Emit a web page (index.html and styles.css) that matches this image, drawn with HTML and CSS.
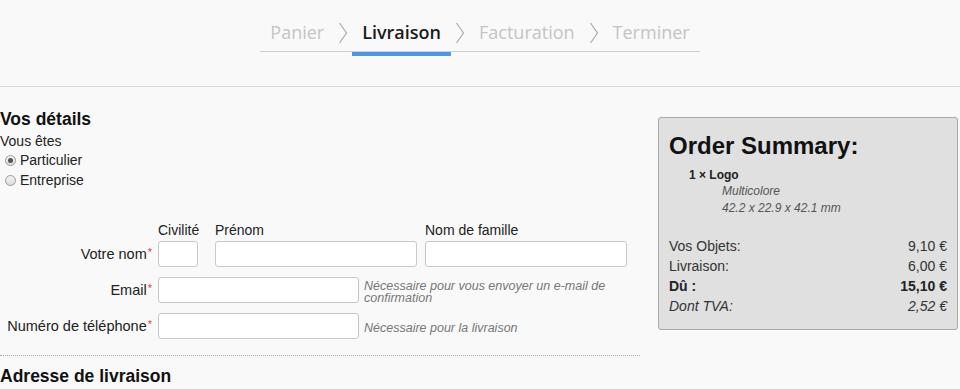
FILE: index.html
```html
<!DOCTYPE html>
<html lang="fr">
<head>
<meta charset="utf-8">
<title>Livraison</title>
<link rel="stylesheet" href="styles.css">
</head>
<body>
<header class="steps-bar">
  <nav class="steps">
    <span class="step">Panier</span>
    <span class="chev"><svg width="10" height="22" viewBox="0 0 10 22"><path d="M1.5 1 L8.5 11 L1.5 21" fill="none" stroke="#aaa" stroke-width="1.2"/></svg></span>
    <span class="step active">Livraison</span>
    <span class="chev"><svg width="10" height="22" viewBox="0 0 10 22"><path d="M1.5 1 L8.5 11 L1.5 21" fill="none" stroke="#aaa" stroke-width="1.2"/></svg></span>
    <span class="step">Facturation</span>
    <span class="chev"><svg width="10" height="22" viewBox="0 0 10 22"><path d="M1.5 1 L8.5 11 L1.5 21" fill="none" stroke="#aaa" stroke-width="1.2"/></svg></span>
    <span class="step">Terminer</span>
  </nav>
</header>
<main class="page">
  <section class="form-col">
    <h2 class="title">Vos détails</h2>
    <div class="who">Vous êtes</div>
    <label class="radio"><span class="rb checked"></span>Particulier</label>
    <label class="radio"><span class="rb"></span>Entreprise</label>

    <div class="grid">
      <div></div>
      <div class="col-heads">
        <span class="h-civ">Civilité</span>
        <span class="h-pre">Prénom</span>
        <span class="h-nom">Nom de famille</span>
      </div>

      <div class="lbl">Votre nom<span class="req">*</span></div>
      <div class="row">
        <span class="in in-civ"></span>
        <span class="in in-pre"></span>
        <span class="in in-nom"></span>
      </div>

      <div class="lbl">Email<span class="req">*</span></div>
      <div class="row">
        <span class="in in-wide"></span>
        <span class="hint">Nécessaire pour vous envoyer un e-mail de confirmation</span>
      </div>

      <div class="lbl">Numéro de téléphone<span class="req">*</span></div>
      <div class="row">
        <span class="in in-wide"></span>
        <span class="hint hint-low">Nécessaire pour la livraison</span>
      </div>
    </div>

    <hr class="dots">
    <h2 class="title">Adresse de livraison</h2>
  </section>

  <aside class="summary">
    <h1 class="sum-title">Order Summary:</h1>
    <div class="item">1 × Logo</div>
    <div class="detail">Multicolore</div>
    <div class="detail">42.2 x 22.9 x 42.1 mm</div>
    <div class="totals">
      <div class="tr"><span>Vos Objets:</span><span>9,10 €</span></div>
      <div class="tr"><span>Livraison:</span><span>6,00 €</span></div>
      <div class="tr bold"><span>Dû :</span><span>15,10 €</span></div>
      <div class="tr ital"><span>Dont TVA:</span><span>2,52 €</span></div>
    </div>
  </aside>
</main>
</body>
</html>
```
FILE: styles.css
```css
* { box-sizing: border-box; }
html, body { margin: 0; padding: 0; }
body {
  background: #f9f9f9;
  font-family: "Liberation Sans", Arial, sans-serif;
  font-size: 14px;
  color: #222;
  width: 960px;
  height: 389px;
  overflow: hidden;
}
.steps-bar {
  height: 87px;
  border-bottom: 1px solid #dcdcdc;
  display: flex;
  justify-content: center;
  padding-top: 19px;
}
.steps {
  display: flex;
  align-items: flex-start;
  height: 33px;
  border-bottom: 1px solid #cfcfcf;
  padding: 0;
  font-family: "Open Sans", "Noto Sans", sans-serif;
  font-size: 18px;
}
.step {
  color: #c4c4c4;
  height: 33px;
  line-height: 26px;
  padding: 0 10px;
}
.step.active {
  color: #1a1a1a;
  font-weight: 600;
  border-bottom: 4px solid #4a97e8;
  height: 37px;
}
.chev { padding: 3px 4px 0 4px; }
.chev svg { display: block; }

.page {
  display: flex;
  align-items: flex-start;
}
.form-col { width: 640px; padding-top: 22px; }
.title {
  font-size: 17.5px;
  font-weight: bold;
  margin: 0;
  line-height: 20px;
  color: #111;
}
.who { line-height: 18px; margin-top: 3px; }
.radio { display: flex; align-items: center; line-height: 20px; padding-left: 5px; }
.rb {
  width: 11px; height: 11px;
  border-radius: 50%;
  border: 1px solid #9a9a9a;
  background: linear-gradient(#f2f2f2, #dcdcdc);
  margin-right: 4px;
  position: relative;
}
.rb.checked::after {
  content: "";
  position: absolute;
  left: 2px; top: 2px;
  width: 5px; height: 5px;
  border-radius: 50%;
  background: #555;
}
.grid {
  display: grid;
  grid-template-columns: 152px 1fr;
  grid-auto-rows: auto;
  column-gap: 6px;
  row-gap: 10px;
  margin-top: 24px;
}
.grid > .col-heads { margin-bottom: -5px; }
.col-heads { display: flex; height: 22px; line-height: 32px; font-size: 14px; }
.h-civ { width: 57px; }
.h-pre { width: 210px; }
.lbl { text-align: right; line-height: 26px; height: 26px; font-size: 14.5px; }
.req { color: #d44; font-size: 11px; position: relative; top: -3px; margin-left: 1px; }
.row { display: flex; align-items: flex-start; height: 26px; }
.in {
  display: block;
  height: 26px;
  background: #fff;
  border: 1px solid #c8c8c8;
  border-radius: 3px;
  flex: none;
}
.in-civ { width: 40px; margin-right: 17px; }
.in-pre { width: 202px; margin-right: 8px; }
.in-nom { width: 202px; }
.in-wide { width: 201px; margin-right: 5px; }
.hint {
  font-style: italic;
  color: #777;
  font-size: 12.5px;
  line-height: 12px;
  width: 260px;
  padding-top: 3px;
}
.hint-low { padding-top: 9px; }
.dots {
  border: 0;
  border-top: 1px dotted #aaa;
  margin: 16px 0 10px 0;
  width: 640px;
}

.summary {
  margin-left: 18px;
  margin-top: 30px;
  width: 300px;
  height: 213px;
  background: #e0e0e0;
  border: 1px solid #a9a9a9;
  border-radius: 3px;
  padding: 13px 10px 0 10px;
}
.sum-title {
  margin: 0;
  font-size: 24px;
  line-height: 30px;
  font-weight: bold;
  color: #111;
}
.item { font-weight: bold; font-size: 12px; padding-left: 20px; margin-top: 6px; line-height: 16px; }
.detail { font-style: italic; font-size: 12px; color: #555; padding-left: 53px; line-height: 17px; }
.totals { margin-top: 19px; }
.tr { display: flex; justify-content: space-between; line-height: 20px; color: #333; }
.tr.bold { font-weight: bold; color: #222; }
.tr.ital { font-style: italic; }
```
